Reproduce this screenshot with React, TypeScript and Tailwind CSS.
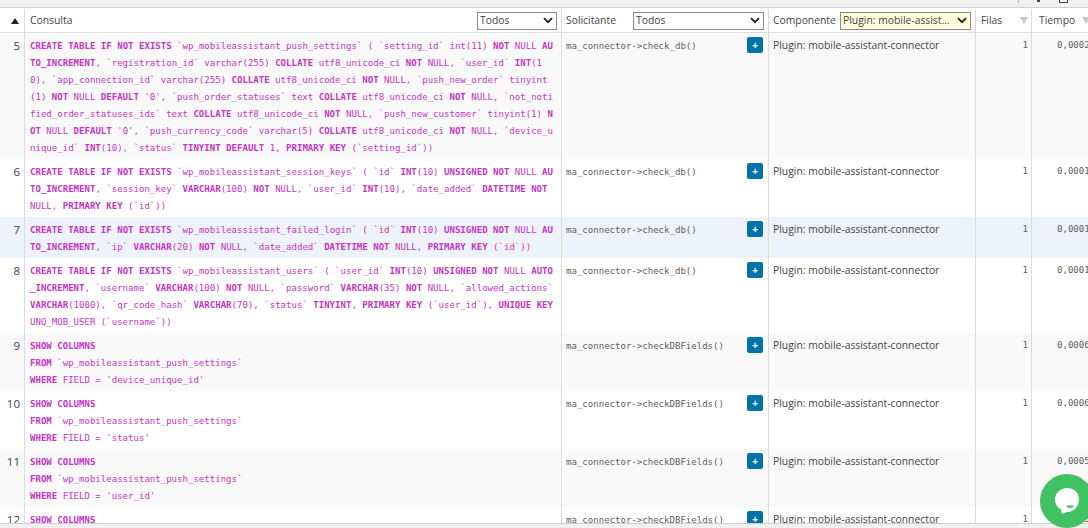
const mono = "font-['DejaVu_Sans_Mono',monospace]";

const KEYWORDS =
  /(\b(?:CREATE|TABLE|IF|EXISTS|COLLATE|NOT|DEFAULT|PRIMARY|KEY|UNIQUE|UNSIGNED|INT|VARCHAR|DATETIME|TINYINT|AU|TO_INCREMENT|AUTO|_INCREMENT|N|OT|SHOW|COLUMNS|FROM|WHERE)\b)/;

function SqlLine({ text }: { text: string }) {
  const parts = text.split(KEYWORDS);
  return (
    <div className="h-[17px] whitespace-pre">
      {parts.map((p, i) => (i % 2 === 1 ? <b key={i} className="font-bold">{p}</b> : <span key={i}>{p}</span>))}
    </div>
  );
}

function Select({ label, className }: { label: string; className: string }) {
  return (
    <div className={`flex h-[18px] items-center justify-between border border-[#8c8c8c] pl-[2px] pr-[3px] text-[10.35px] text-[#444] ${className}`}>
      <span className="truncate">{label}</span>
      <svg width="10" height="7" viewBox="0 0 10 7" className="shrink-0">
        <path d="M1 1.2 5 5.2 9 1.2" fill="none" stroke="#222" strokeWidth="1.8" />
      </svg>
    </div>
  );
}

function SortArrow() {
  return <span className="ml-auto h-0 w-0 border-x-[4px] border-t-[7px] border-x-transparent border-t-[#c8c8c8]" />;
}

type RowData = { n: number; lines: string[]; caller: string; time: string; bg: string };

const rows: RowData[] = [
  {
    n: 5,
    bg: "bg-[#f9f9f9]",
    caller: "ma_connector->check_db()",
    time: "0,0002",
    lines: [
      "CREATE TABLE IF NOT EXISTS `wp_mobileassistant_push_settings` ( `setting_id` int(11) NOT NULL AU",
      "TO_INCREMENT, `registration_id` varchar(255) COLLATE utf8_unicode_ci NOT NULL, `user_id` INT(1",
      "0), `app_connection_id` varchar(255) COLLATE utf8_unicode_ci NOT NULL, `push_new_order` tinyint",
      "(1) NOT NULL DEFAULT '0', `push_order_statuses` text COLLATE utf8_unicode_ci NOT NULL, `not_noti",
      "fied_order_statuses_ids` text COLLATE utf8_unicode_ci NOT NULL, `push_new_customer` tinyint(1) N",
      "OT NULL DEFAULT '0', `push_currency_code` varchar(5) COLLATE utf8_unicode_ci NOT NULL, `device_u",
      "nique_id` INT(10), `status` TINYINT DEFAULT 1, PRIMARY KEY (`setting_id`))",
    ],
  },
  {
    n: 6,
    bg: "bg-white",
    caller: "ma_connector->check_db()",
    time: "0,0001",
    lines: [
      "CREATE TABLE IF NOT EXISTS `wp_mobileassistant_session_keys` ( `id` INT(10) UNSIGNED NOT NULL AU",
      "TO_INCREMENT, `session_key` VARCHAR(100) NOT NULL, `user_id` INT(10), `date_added` DATETIME NOT",
      "NULL, PRIMARY KEY (`id`))",
    ],
  },
  {
    n: 7,
    bg: "bg-[#eef2fa]",
    caller: "ma_connector->check_db()",
    time: "0,0001",
    lines: [
      "CREATE TABLE IF NOT EXISTS `wp_mobileassistant_failed_login` ( `id` INT(10) UNSIGNED NOT NULL AU",
      "TO_INCREMENT, `ip` VARCHAR(20) NOT NULL, `date_added` DATETIME NOT NULL, PRIMARY KEY (`id`))",
    ],
  },
  {
    n: 8,
    bg: "bg-white",
    caller: "ma_connector->check_db()",
    time: "0,0001",
    lines: [
      "CREATE TABLE IF NOT EXISTS `wp_mobileassistant_users` ( `user_id` INT(10) UNSIGNED NOT NULL AUTO",
      "_INCREMENT, `username` VARCHAR(100) NOT NULL, `password` VARCHAR(35) NOT NULL, `allowed_actions`",
      "VARCHAR(1000), `qr_code_hash` VARCHAR(70), `status` TINYINT, PRIMARY KEY (`user_id`), UNIQUE KEY",
      "UNQ_MOB_USER (`username`))",
    ],
  },
  {
    n: 9,
    bg: "bg-[#f9f9f9]",
    caller: "ma_connector->checkDBFields()",
    time: "0,0006",
    lines: ["SHOW COLUMNS", "FROM `wp_mobileassistant_push_settings`", "WHERE FIELD = 'device_unique_id'"],
  },
  {
    n: 10,
    bg: "bg-white",
    caller: "ma_connector->checkDBFields()",
    time: "0,0006",
    lines: ["SHOW COLUMNS", "FROM `wp_mobileassistant_push_settings`", "WHERE FIELD = 'status'"],
  },
  {
    n: 11,
    bg: "bg-[#f9f9f9]",
    caller: "ma_connector->checkDBFields()",
    time: "0,0005",
    lines: ["SHOW COLUMNS", "FROM `wp_mobileassistant_push_settings`", "WHERE FIELD = 'user_id'"],
  },
  {
    n: 12,
    bg: "bg-white",
    caller: "ma_connector->checkDBFields()",
    time: "0,0005",
    lines: ["SHOW COLUMNS"],
  },
];

const grid = "grid grid-cols-[25px_537px_207px_207px_56px_1fr]";
const cellBorder = "border-r border-[#dcdcdc]";

function Row({ row }: { row: RowData }) {
  return (
    <div className={`${grid} ${row.bg} shrink-0`}>
      <div className={`${cellBorder} pr-[4px] pt-[4px] text-right text-[11.5px] leading-[17px] text-[#444]`}>{row.n}</div>
      <div className={`${cellBorder} ${mono} overflow-hidden pb-[2px] pl-[5px] pt-[5px] text-[9.05px] leading-[17px] text-[#c636c4]`}>
        {row.lines.map((l, i) => (
          <SqlLine key={i} text={l} />
        ))}
      </div>
      <div className={`${cellBorder} flex items-start justify-between pl-[4px] pr-[5px] pt-[4px]`}>
        <span className={`${mono} pt-px text-[9.05px] leading-[17px] text-[#606060]`}>{row.caller}</span>
        <span className="flex h-[16px] w-[16px] items-center justify-center rounded-[2px] bg-[#0073aa] text-[10px] font-bold leading-none text-white">+</span>
      </div>
      <div className={`${cellBorder} pl-[4px] pt-[4px] text-[10.35px] leading-[17px] text-[#444]`}>Plugin: mobile-assistant-connector</div>
      <div className={`${cellBorder} ${mono} pr-[3px] pt-[4px] text-right text-[9.05px] leading-[17px] text-[#606060]`}>1</div>
      <div className={`${mono} overflow-hidden whitespace-nowrap pl-[25px] pt-[4px] text-[9.05px] leading-[17px] text-[#606060]`}>{row.time}</div>
    </div>
  );
}

export default function App() {
  return (
    <div className="relative flex h-[528px] w-[1088px] flex-col overflow-hidden bg-[#f1f1f1] font-['Open_Sans',sans-serif]">
      {/* top bar, only the feet of its icons are in view */}
      <div className="flex h-[7px] shrink-0 items-start justify-end overflow-hidden pr-[20px]">
        <span className="h-[3px] w-px bg-[#bbb]" />
        <span className="ml-[18px] h-[2px] w-[3px] bg-[#444]" />
        <span className="ml-[19px] h-[3px] w-[9px] border-x border-b border-[#444]" />
      </div>
      <div className="flex min-h-0 flex-1 flex-col overflow-hidden border-y border-[#cfcfcf] bg-white">
        <div className={`${grid} h-[25px] shrink-0 border-b border-[#dcdcdc] pt-px text-[10.35px] text-[#444]`}>
          <div className={`${cellBorder} flex items-center pl-[11px]`}>
            <span className="h-0 w-0 border-x-[4px] border-b-[6px] border-x-transparent border-b-[#222]" />
          </div>
          <div className={`${cellBorder} flex items-center justify-between pl-[5px] pr-[4px]`}>
            <span>Consulta</span>
            <Select label="Todos" className="w-[80px] bg-white" />
          </div>
          <div className={`${cellBorder} flex items-center justify-between pl-[4px] pr-[4px]`}>
            <span>Solicitante</span>
            <Select label="Todos" className="w-[131px] bg-white" />
          </div>
          <div className={`${cellBorder} flex items-center justify-between pl-[4px] pr-[4px]`}>
            <span>Componente</span>
            <Select label="Plugin: mobile-assist..." className="w-[131px] bg-[#ffffdd]" />
          </div>
          <div className={`${cellBorder} flex items-center pl-[5px] pr-[3px]`}>
            <span>Filas</span>
            <SortArrow />
          </div>
          <div className="flex items-center pl-[7px]">
            <span>Tiempo</span>
            <span className="ml-[7px] h-0 w-0 border-x-[4px] border-t-[7px] border-x-transparent border-t-[#c8c8c8]" />
          </div>
        </div>
        {rows.map((r) => (
          <Row key={r.n} row={r} />
        ))}
      </div>
      <div className="h-[4px] shrink-0" />
      {/* chat bubble */}
      <div className="absolute left-[1040px] top-[474px] flex h-[54px] w-[54px] items-center justify-center rounded-full bg-[#40c263]">
        <svg width="26" height="28" viewBox="0 0 26 28">
          <path d="M13 1C6.400 1 1 6.200 1 12.500c0 4.200 2.300 7.800 5.800 9.800L8 27l5-2c6.600 0 12-5.200 12-12.500S19.600 1 13 1z" fill="#fff" />
          <path d="M12 18.500h8c-.8 1.700-2.200 2.500-4 2.500s-3.200-.8-4-2.500z" fill="#40c263" />
        </svg>
      </div>
    </div>
  );
}
